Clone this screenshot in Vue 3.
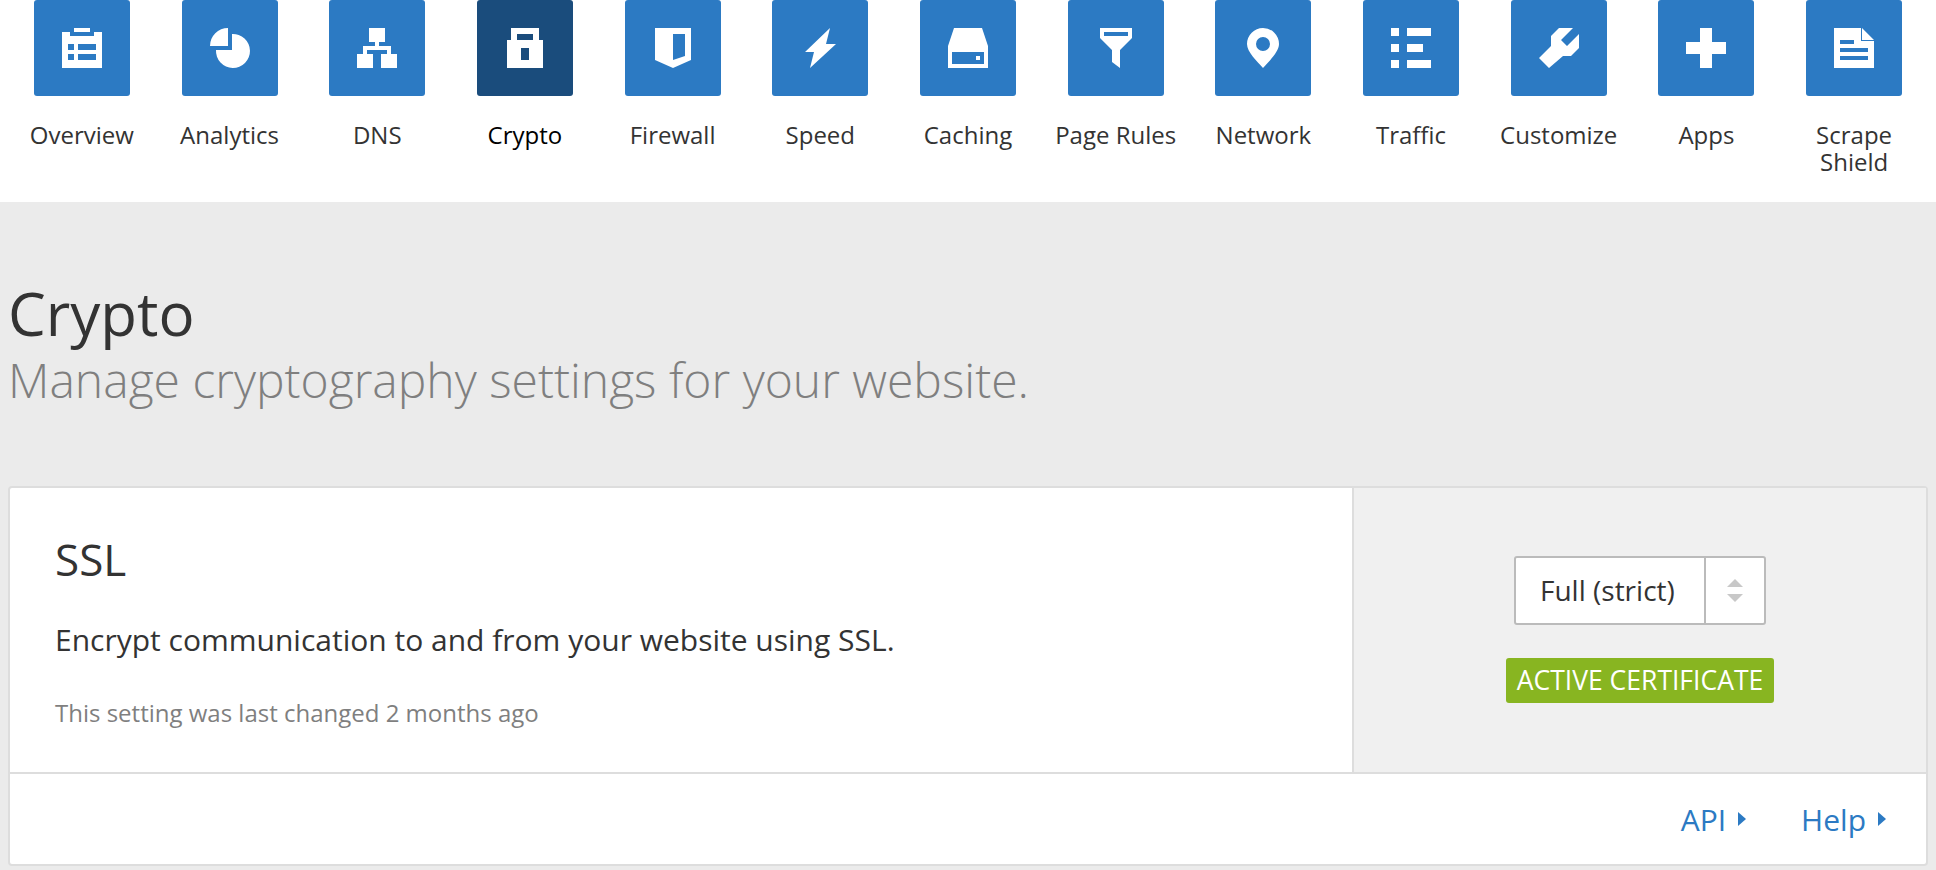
<template>
  <div class="page">
    <nav class="tabs">
      <a v-for="tab in tabs" :key="tab.label" class="tab" :class="{ active: tab.label === 'Crypto' }">
        <span class="tile">
          <svg viewBox="0 0 48 48" width="48" height="48">
            <path :d="tab.icon" fill="#fff" fill-rule="evenodd" />
          </svg>
        </span>
        <span class="tab-label">{{ tab.label }}</span>
      </a>
    </nav>

    <header class="head">
      <h1>Crypto</h1>
      <p>Manage cryptography settings for your website.</p>
    </header>

    <section class="card">
      <div class="card-body">
        <div class="card-main">
          <h2>SSL</h2>
          <p class="desc">Encrypt communication to and from your website using SSL.</p>
          <p class="note">This setting was last changed 2 months ago</p>
        </div>
        <div class="card-side">
          <div class="select">
            <span class="select-value">Full (strict)</span>
            <span class="select-arrows">
              <i class="up"></i>
              <i class="down"></i>
            </span>
          </div>
          <span class="badge">ACTIVE CERTIFICATE</span>
        </div>
      </div>
      <div class="card-foot">
        <a class="link">API<i class="caret"></i></a>
        <a class="link">Help<i class="caret"></i></a>
      </div>
    </section>
  </div>
</template>

<script setup>
const tabs = [
  {
    label: "Overview",
    icon: "M16 4H32V8H16ZM4 8H12V12H36V8H44V44H4ZM10 20V26H16V20ZM20 20V26H38V20ZM10 30V36H16V30ZM20 30V36H38V30Z",
  },
  {
    label: "Analytics",
    icon: "M22 4V22H4A18 18 0 0 1 22 4ZM26 10V26H10A17 17 0 1 0 26 10Z",
  },
  {
    label: "DNS",
    icon: "M16 4H32V18H26V22H38V30H44V44H28V30H34V26H14V30H20V44H4V30H10V22H22V18H16Z",
  },
  {
    label: "Crypto",
    icon: "M10 4H38V16H42V44H6V16H10ZM16 10V16H32V10ZM20 24V36H28V24Z",
  },
  {
    label: "Firewall",
    icon: "M6 4H42V36L24 44L6 36ZM24 10V36L36 32V10Z",
  },
  {
    label: "Speed",
    icon: "M34 4L9 28H18L14 44L40 20H30Z",
  },
  {
    label: "Caching",
    icon: "M10 4H38L44 22V44H4V22ZM8 28V40H40V28ZM32 32H36V36H32Z",
  },
  {
    label: "Page Rules",
    icon: "M8 4H40V14L28 26V44L20 38V26L8 14ZM12 8V12H36V8Z",
  },
  {
    label: "Network",
    icon: "M24 4A16 16 0 0 1 40 20C40 28 30 37 24 44C18 37 8 28 8 20A16 16 0 0 1 24 4ZM24 13A7 7 0 1 0 24 27A7 7 0 1 0 24 13Z",
  },
  {
    label: "Traffic",
    icon: "M4 4H12V12H4ZM20 4H44V12H20ZM4 20H12V28H4ZM20 20H36V28H20ZM4 36H12V44H4ZM20 36H44V44H20Z",
  },
  {
    label: "Customize",
    icon: "M38 4L26 16L32 22L44 10V24L36 32H28L14 44L4 34L16 22V12L24 4Z",
  },
  {
    label: "Apps",
    icon: "M18 4H30V18H44V30H30V44H18V30H4V18H18Z",
  },
  {
    label: "Scrape Shield",
    icon: "M32 4L44 16H32ZM4 4H31V17H44V44H4ZM10 16V20H24V16ZM10 24V28H38V24ZM10 32V36H38V32Z",
  },
];
</script>

<style>
body {
  background: #ebebeb;
}
</style>

<style scoped>
.page {
  min-height: 100vh;
  padding-bottom: 5px;
  box-sizing: border-box;
  background: #ebebeb;
  color: #333;
  font-family: "Open Sans", "Noto Sans", sans-serif;
}

.tabs {
  display: flex;
  height: 202px;
  padding: 0 8px;
  background: #fff;
}
.tab {
  flex: 1 1 0;
  min-width: 0;
  display: flex;
  flex-direction: column;
  align-items: center;
  text-align: center;
}
.tile {
  width: 96px;
  height: 96px;
  display: flex;
  align-items: center;
  justify-content: center;
  background: #2c7ac3;
  border-radius: 3px;
}
.tab.active .tile {
  background: #1a4c7c;
}
.tab-label {
  margin-top: 25px;
  padding: 0 12px;
  font-size: 24px;
  line-height: 27px;
}
.tab.active .tab-label {
  color: #000;
}

.head {
  padding: 75px 8px 76px;
}
.head h1 {
  margin: 0;
  font-size: 60px;
  font-weight: 400;
  line-height: 73px;
}
.head p {
  margin: 0;
  font-size: 48px;
  font-weight: 300;
  line-height: 60px;
  color: #7f7f7f;
}

.card {
  margin: 0 8px;
  border: 2px solid #ddd;
  border-radius: 4px;
  background: #fff;
}
.card-body {
  display: flex;
  height: 284px;
  border-bottom: 2px solid #ddd;
}
.card-main {
  flex: 1;
  padding: 47px 45px 0;
  box-sizing: border-box;
}
.card-main h2 {
  margin: 0;
  font-size: 44px;
  font-weight: 400;
  line-height: 48px;
}
.desc {
  margin: 38px 0 0;
  font-size: 30px;
  line-height: 38px;
}
.note {
  margin: 39px 0 0;
  font-size: 24px;
  line-height: 30px;
  color: #7f7f7f;
}
.card-side {
  width: 574px;
  flex: none;
  box-sizing: border-box;
  padding-bottom: 2px;
  border-left: 2px solid #ddd;
  background: #f0f0f0;
  display: flex;
  flex-direction: column;
  align-items: center;
  justify-content: center;
  gap: 33px;
}
.select {
  display: flex;
  width: 252px;
  height: 69px;
  box-sizing: border-box;
  border: 2px solid #bbb;
  border-radius: 3px;
  background: #fff;
}
.select-value {
  flex: 1;
  display: flex;
  align-items: center;
  padding-left: 24px;
  font-size: 28px;
}
.select-arrows {
  width: 58px;
  flex: none;
  border-left: 2px solid #bbb;
  display: flex;
  flex-direction: column;
  align-items: center;
  justify-content: center;
  gap: 7px;
}
.up,
.down {
  width: 0;
  height: 0;
  border-left: 8px solid transparent;
  border-right: 8px solid transparent;
}
.up {
  border-bottom: 8px solid #c8c8c8;
}
.down {
  border-top: 8px solid #c8c8c8;
}
.badge {
  height: 45px;
  padding: 0 11px;
  display: flex;
  align-items: center;
  background: #88b521;
  border-radius: 3px;
  color: #fff;
  font-size: 26.5px;
}

.card-foot {
  height: 90px;
  display: flex;
  align-items: center;
  justify-content: flex-end;
  gap: 55px;
  padding-right: 40px;
}
.link {
  display: flex;
  align-items: center;
  color: #2c7ac3;
  font-size: 30px;
}
.caret {
  margin-left: 12px;
  width: 0;
  height: 0;
  border-top: 7px solid transparent;
  border-bottom: 7px solid transparent;
  border-left: 8px solid #2c7ac3;
}
</style>
